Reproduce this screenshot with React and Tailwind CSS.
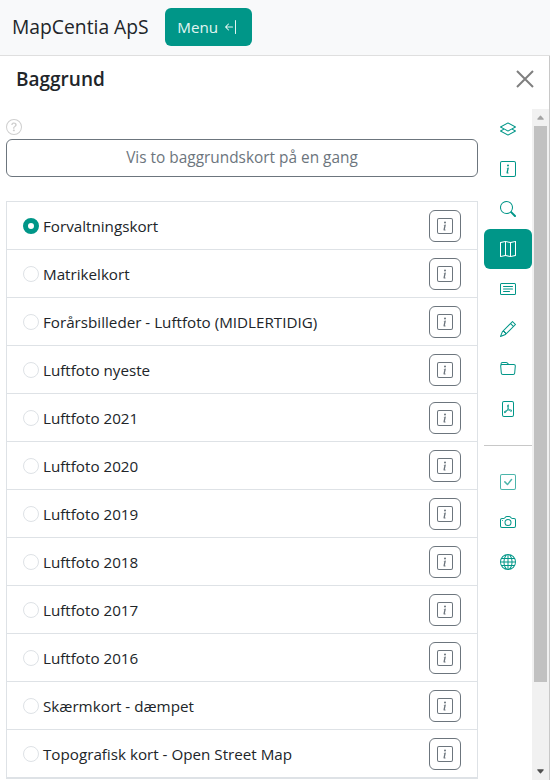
import {
  BsLayers,
  BsInfoSquare,
  BsSearch,
  BsMap,
  BsCardText,
  BsPencil,
  BsFolder,
  BsFilePdf,
  BsCheckSquare,
  BsCamera,
  BsGlobe,
  BsQuestionCircle,
  BsArrowBarLeft,
  BsCaretUpFill,
  BsCaretDownFill,
} from 'react-icons/bs';

const layers = [
  'Forvaltningskort',
  'Matrikelkort',
  'Forårsbilleder - Luftfoto (MIDLERTIDIG)',
  'Luftfoto nyeste',
  'Luftfoto 2021',
  'Luftfoto 2020',
  'Luftfoto 2019',
  'Luftfoto 2018',
  'Luftfoto 2017',
  'Luftfoto 2016',
  'Skærmkort - dæmpet',
  'Topografisk kort - Open Street Map',
];

const NavItem = ({ icon: Icon, active, muted }) => (
  <div
    className={`h-10 flex items-center justify-center rounded-md ${
      active ? 'bg-[#009688] text-white' : 'text-[#009688]'
    } ${muted ? 'opacity-70' : ''}`}
  >
    <Icon size={16} />
  </div>
);

const App = () => {
  return (
    <div className="h-[780px] overflow-hidden flex flex-col bg-white text-[#212529] font-['Open_Sans',sans-serif] text-[15.2px]">
      {/* Top bar */}
      <header className="h-14 shrink-0 flex items-center bg-[#f8f9fa] border-b border-[#dfdfdf] pl-3 pb-px">
        <span className="text-[19.3px] leading-none">MapCentia ApS</span>
        <button className="ml-4 w-[87px] h-[38px] rounded-md bg-[#009688] text-[#e3f5f2] flex items-center justify-center gap-[5px]">
          Menu
          <BsArrowBarLeft size={16} />
        </button>
      </header>

      <div className="flex-1 min-h-0 flex flex-col border-r border-[#c8c8c8]">
        {/* Panel title */}
        <div className="h-[53px] shrink-0 flex items-center justify-between pl-4 pr-[15px] pb-1.5">
          <h2 className="text-[19px] font-semibold">Baggrund</h2>
          <svg viewBox="0 0 18 18" className="w-[18px] h-[18px] mb-0.5 text-[#7f7f7f]">
            <path d="M1 1 17 17M17 1 1 17" stroke="currentColor" strokeWidth="2" fill="none" />
          </svg>
        </div>

        <div className="flex-1 min-h-0 flex">
          {/* Layer list */}
          <div className="w-[472px] ml-1.5 shrink-0 pt-2.5">
            <BsQuestionCircle size={16} className="text-[#cfcfcf]" />
            <button className="mt-1 w-full h-[38px] rounded-md border border-[#6c757d] text-[#6c757d] text-[15.4px] bg-white">
              Vis to baggrundskort på en gang
            </button>
            <ul className="mt-6 border border-[#dee2e6]">
              {layers.map((name, i) => (
                <li key={name} className="h-12 flex items-center border-b border-[#dee2e6] pl-4 pr-4">
                  <span
                    className={`w-4 h-4 shrink-0 rounded-full ${
                      i === 0 ? 'border-[5px] border-[#009688]' : 'border border-[#dee2e6]'
                    }`}
                  ></span>
                  <span className="ml-1 flex-1 whitespace-nowrap pt-0.5">{name}</span>
                  <button className="w-8 h-8 flex items-center justify-center rounded-md border border-[#6c757d] text-[#6c757d]">
                    <BsInfoSquare size={16} />
                  </button>
                </li>
              ))}
            </ul>
          </div>

          {/* Side navigation */}
          <nav className="w-12 ml-1.5 shrink-0">
            <NavItem icon={BsLayers} />
            <NavItem icon={BsInfoSquare} />
            <NavItem icon={BsSearch} />
            <NavItem icon={BsMap} active />
            <NavItem icon={BsCardText} />
            <NavItem icon={BsPencil} />
            <NavItem icon={BsFolder} />
            <NavItem icon={BsFilePdf} />
            <hr className="mt-4 mb-4 border-[#c8c8c8]" />
            <NavItem icon={BsCheckSquare} muted />
            <NavItem icon={BsCamera} />
            <NavItem icon={BsGlobe} />
          </nav>

          {/* Scrollbar */}
          <div className="w-[17px] shrink-0 bg-[#f1f1f1] flex flex-col px-0.5">
            <div className="h-[17px] flex items-center justify-center text-[#a3a3a3]">
              <BsCaretUpFill size={9} />
            </div>
            <div className="h-[556px] bg-[#c1c1c1]"></div>
            <div className="flex-1 flex items-end justify-center pb-1 text-[#505050]">
              <BsCaretDownFill size={9} />
            </div>
          </div>
        </div>
      </div>
    </div>
  );
};

export default App;
